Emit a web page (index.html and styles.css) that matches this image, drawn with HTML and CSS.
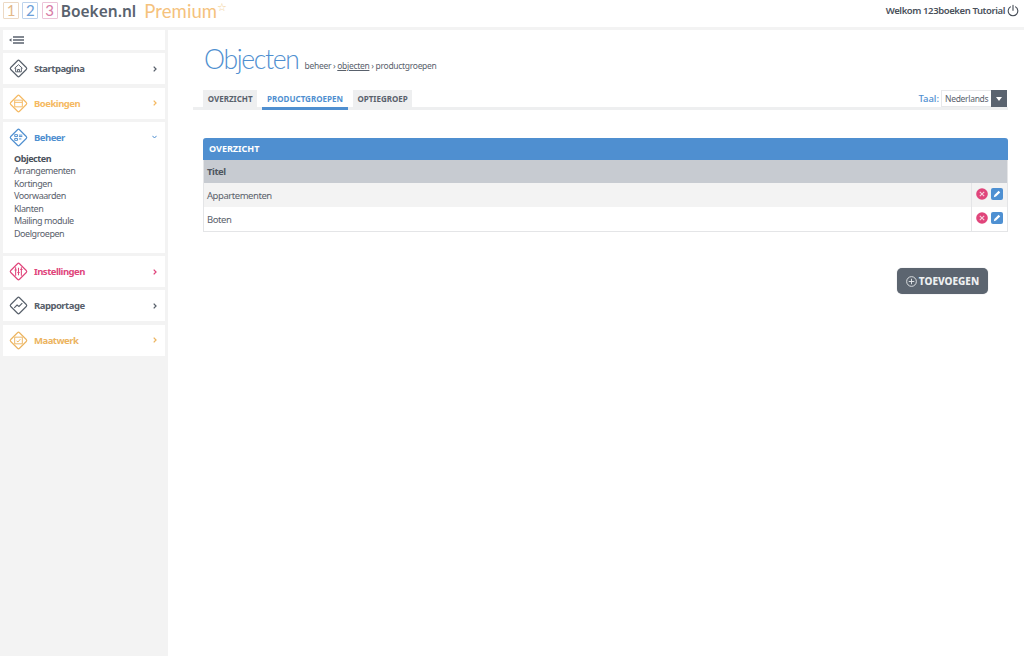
FILE: index.html
```html
<!DOCTYPE html>
<html lang="nl">
<head>
<meta charset="utf-8">
<title>Objecten</title>
<link rel="stylesheet" href="styles.css">
</head>
<body>
<header class="topbar">
  <div class="logo">
    <span class="digit d1">1</span><span class="digit d2">2</span><span class="digit d3">3</span>
    <span class="brand">Boeken.nl</span>
    <span class="premium">Premium</span><span class="star">☆</span>
  </div>
  <div class="welcome">
    <span>Welkom 123boeken Tutorial</span>
    <svg class="power" viewBox="0 0 14 14" width="12" height="13"><path d="M4 2.800a5.600 5.600 0 1 0 6 0M7 .8v6" fill="none" stroke="#444b55" stroke-width="1.300" stroke-linecap="round"/></svg>
  </div>
</header>
<div class="shell">
  <aside class="sidebar">
    <div class="card toggle">
      <svg viewBox="0 0 15 8" width="15" height="8"><path d="M4 1h11M4 4h11M4 7h11" stroke="#5a626d" stroke-width="1.300"/><path d="M0 4l2.500-1.800v3.600z" fill="#5a626d"/></svg>
    </div>
    <div class="card item slate">
      <svg class="ico" viewBox="0 0 22 22"><rect x="4.500" y="4.500" width="13" height="13" rx="1.500" transform="rotate(45 11 11)" fill="none" stroke="currentColor" stroke-width="1.200"/><path d="M6.800 10.800L11 7l4.200 3.800M8 10v4.500h6V10M10 14.500v-2.500h2v2.500" fill="none" stroke="currentColor" stroke-width="1"/></svg>
      <span class="label">Startpagina</span>
      <svg class="chev" viewBox="0 0 4 6" width="4" height="6"><path d="M.7.600L3 3 .7 5.400" fill="none" stroke="currentColor" stroke-width="1.300"/></svg>
    </div>
    <div class="card item orange">
      <svg class="ico" viewBox="0 0 22 22"><rect x="4.500" y="4.500" width="13" height="13" rx="1.500" transform="rotate(45 11 11)" fill="none" stroke="currentColor" stroke-width="1.200"/><path d="M7 7.500h8v7H7zM7 9.800h8" fill="none" stroke="currentColor" stroke-width="1"/></svg>
      <span class="label">Boekingen</span>
      <svg class="chev" viewBox="0 0 4 6" width="4" height="6"><path d="M.7.600L3 3 .7 5.400" fill="none" stroke="currentColor" stroke-width="1.300"/></svg>
    </div>
    <div class="card open">
      <div class="item blue">
        <svg class="ico" viewBox="0 0 22 22"><rect x="4.500" y="4.500" width="13" height="13" rx="1.500" transform="rotate(45 11 11)" fill="none" stroke="currentColor" stroke-width="1.200"/><path d="M7 8h3v2H7zM7 12h3v2H7zM11.500 8.500H15M11.500 10H15M11.500 12.500H14" fill="none" stroke="currentColor" stroke-width="1"/></svg>
        <span class="label">Beheer</span>
        <svg class="chev" viewBox="0 0 5 4" width="5" height="4"><path d="M.4.800L2.500 3 4.600.800" fill="none" stroke="currentColor" stroke-width="1"/></svg>
      </div>
      <ul class="submenu">
        <li class="current">Objecten</li>
        <li>Arrangementen</li>
        <li>Kortingen</li>
        <li>Voorwaarden</li>
        <li>Klanten</li>
        <li>Mailing module</li>
        <li>Doelgroepen</li>
      </ul>
    </div>
    <div class="card item pink">
      <svg class="ico" viewBox="0 0 22 22"><rect x="4.500" y="4.500" width="13" height="13" rx="1.500" transform="rotate(45 11 11)" fill="none" stroke="currentColor" stroke-width="1.200"/><path d="M8 6.500v9M11 7v8M14 6.500v9M6.800 9.500h2.400M9.800 12h2.400M12.800 9h2.400" fill="none" stroke="currentColor" stroke-width="1.100"/></svg>
      <span class="label">Instellingen</span>
      <svg class="chev" viewBox="0 0 4 6" width="4" height="6"><path d="M.7.600L3 3 .7 5.400" fill="none" stroke="currentColor" stroke-width="1.300"/></svg>
    </div>
    <div class="card item slate">
      <svg class="ico" viewBox="0 0 22 22"><rect x="4.500" y="4.500" width="13" height="13" rx="1.500" transform="rotate(45 11 11)" fill="none" stroke="currentColor" stroke-width="1.200"/><path d="M6.500 13.500l3-3 2 1.500 3.500-3.500" fill="none" stroke="currentColor" stroke-width="1.200"/></svg>
      <span class="label">Rapportage</span>
      <svg class="chev" viewBox="0 0 4 6" width="4" height="6"><path d="M.7.600L3 3 .7 5.400" fill="none" stroke="currentColor" stroke-width="1.300"/></svg>
    </div>
    <div class="card item gold">
      <svg class="ico" viewBox="0 0 22 22"><rect x="4.500" y="4.500" width="13" height="13" rx="1.500" transform="rotate(45 11 11)" fill="none" stroke="currentColor" stroke-width="1.200"/><path d="M7 7.500h8v7H7zM9 11.500l1.500 1 2.500-3" fill="none" stroke="currentColor" stroke-width="1"/></svg>
      <span class="label">Maatwerk</span>
      <svg class="chev" viewBox="0 0 4 6" width="4" height="6"><path d="M.7.600L3 3 .7 5.400" fill="none" stroke="currentColor" stroke-width="1.300"/></svg>
    </div>
  </aside>
  <main class="content">
    <div class="heading">
      <h1>Objecten</h1>
      <p class="crumbs">beheer › <a>objecten</a> › productgroepen</p>
    </div>
    <div class="tabbar">
      <div class="tabs">
        <span class="tab">OVERZICHT</span>
        <span class="tab active">PRODUCTGROEPEN</span>
        <span class="tab">OPTIEGROEP</span>
      </div>
      <div class="lang">
        <span class="lang-label">Taal:</span>
        <div class="select"><span class="select-value">Nederlands</span><span class="select-arrow"></span></div>
      </div>
    </div>
    <section class="panel">
      <h2 class="panel-title">OVERZICHT</h2>
      <div class="row head"><span class="cell-title">Titel</span></div>
      <div class="row odd">
        <span class="cell-title">Appartementen</span>
        <span class="actions">
          <svg viewBox="0 0 12 12" width="12" height="12"><circle cx="6" cy="6" r="5.800" fill="#e0457b"/><path d="M3.800 3.800l4.400 4.400M8.200 3.800l-4.400 4.400" stroke="#f5d5e0" stroke-width="1.100"/></svg>
          <svg viewBox="0 0 12 12" width="12" height="12"><rect width="12" height="12" rx="2" fill="#4e90d2"/><path d="M2.800 9.200l.6-2.200 4.200-4.200 1.600 1.600-4.200 4.200z" fill="#fff"/></svg>
        </span>
      </div>
      <div class="row">
        <span class="cell-title">Boten</span>
        <span class="actions">
          <svg viewBox="0 0 12 12" width="12" height="12"><circle cx="6" cy="6" r="5.800" fill="#e0457b"/><path d="M3.800 3.800l4.400 4.400M8.200 3.800l-4.400 4.400" stroke="#f5d5e0" stroke-width="1.100"/></svg>
          <svg viewBox="0 0 12 12" width="12" height="12"><rect width="12" height="12" rx="2" fill="#4e90d2"/><path d="M2.800 9.200l.6-2.200 4.200-4.200 1.600 1.600-4.200 4.200z" fill="#fff"/></svg>
        </span>
      </div>
    </section>
    <div class="footer-actions">
      <button class="add" type="button">
        <svg viewBox="0 0 12 12" width="11" height="11"><circle cx="6" cy="6" r="5.300" fill="none" stroke="#e6e8ea" stroke-width="1"/><path d="M6 3v6M3 6h6" stroke="#e6e8ea" stroke-width="1"/></svg>
        TOEVOEGEN
      </button>
    </div>
  </main>
</div>
</body>
</html>
```

FILE: styles.css
```css
* { box-sizing: border-box; }
html, body { margin: 0; height: 100%; }
body {
  font-family: "Noto Sans", "Open Sans", sans-serif;
  color: #5a616b;
  background: #fff;
  overflow: hidden;
  height: 656px;
}
.topbar {
  height: 27px;
  background: #fff;
  display: flex;
  justify-content: space-between;
  align-items: flex-start;
  padding: 0 5px 0 3px;
}
.logo { display: flex; align-items: center; padding-top: 2px; height: 19px; }
.digit {
  width: 16px;
  height: 17px;
  margin-right: 3.250px;
  border: 1px solid;
  border-radius: 1px;
  font-size: 15px;
  line-height: 15px;
  text-align: center;
  font-family: "Lato", sans-serif;
}
.d1 { color: #e3b888; border-color: #ecd9c4; }
.d2 { color: #6b9ed8; border-color: #bcd2ec; }
.d3 { color: #d77aa5; border-color: #ecc3d8; }
.brand {
  font-size: 15.500px;
  font-weight: 600;
  color: #59626e;
  margin-right: 8px;
}
.premium {
  font-family: "Lato", sans-serif;
  font-size: 18.500px;
  font-weight: 400;
  color: #f5c27c;
  letter-spacing: 0.100px;
}
.star { font-size: 11px; color: #f3cf95; align-self: flex-start; margin-top: -1px; line-height: 11px; }
.welcome {
  display: flex;
  align-items: center;
  gap: 2px;
  padding-top: 4px;
  font-size: 9.500px;
  font-weight: 600;
  letter-spacing: -0.400px;
  color: #4a515b;
}
.shell { display: flex; height: 629px; border-top: 3px solid #f3f3f3; }
.sidebar {
  width: 168px;
  flex: none;
  background: #f3f3f3;
  padding: 0 3px;
  display: flex;
  flex-direction: column;
  gap: 3.300px;
}
.card { background: #fff; }
.toggle { height: 20px; display: flex; align-items: center; padding-left: 6px; }
.item {
  height: 31px;
  display: flex;
  align-items: center;
  padding: 0 8px 0 5px;
}
.ico { width: 21px; height: 21px; flex: none; margin-right: 5px; }
.label { flex: 1; font-size: 9.500px; font-weight: 700; letter-spacing: -0.500px; }
.chev { flex: none; }
.slate { color: #58606b; }
.orange { color: #f5b962; }
.blue { color: #4f8fd0; }
.pink { color: #e0457b; }
.gold { color: #ecb45f; }
.open { height: 131px; }
.submenu {
  list-style: none;
  margin: 0;
  padding: 0 0 0 11px;
  font-size: 9px;
  line-height: 12.500px;
  letter-spacing: -0.450px;
  color: #59616c;
}
.submenu .current { font-weight: 700; color: #4a515b; }
.content { flex: 1; padding: 0 16px 0 25px; min-width: 0; }
.heading {
  display: flex;
  align-items: baseline;
  gap: 6px;
  padding: 11px 0 0 11px;
  height: 60px;
}
h1 {
  margin: 0;
  font-family: "Lato", sans-serif;
  font-size: 26.500px;
  font-weight: 300;
  letter-spacing: -1.300px;
  color: #4f8fd0;
  line-height: 36px;
}
.crumbs { margin: 0; font-size: 8.500px; letter-spacing: -0.300px; color: #59616c; }
.crumbs a { text-decoration: underline; }
.tabbar {
  height: 20px;
  border-bottom: 3px solid #eeeff0;
  display: flex;
  justify-content: space-between;
  align-items: flex-end;
  padding-left: 10px;
}
.tabs { display: flex; gap: 5px; margin-bottom: -3px; }
.tab {
  height: 20px;
  padding: 0 4.750px;
  background: #eeeff0;
  font-size: 8px;
  font-weight: 700;
  line-height: 18px;
  color: #59616c;
}
.tab.active {
  background: #fff;
  color: #4f8fd0;
  border-bottom: 3px solid #4f8fd0;
}
.lang { display: flex; align-items: center; gap: 2px; margin: 0 1px 0 0; }
.lang-label { font-size: 9.500px; font-weight: 500; color: #4f8fd0; }
.select {
  display: flex;
  height: 17px;
  width: 66px;
  border: 1px solid #e7e8ea;
  background: #fff;
}
.select-value { flex: 1; font-size: 8.500px; line-height: 15px; padding-left: 3px; letter-spacing: -0.300px; color: #59616c; }
.select-arrow {
  width: 16px;
  background: #5a636f;
  margin: -1px -1px -1px 0;
  position: relative;
}
.select-arrow::after {
  content: "";
  position: absolute;
  left: 5px; top: 7px;
  border: 3px solid transparent;
  border-top: 4px solid #fff;
  border-bottom: 0;
}
.panel {
  margin: 28px 0 0 10px;
  border: 1px solid #e4e5e7;
  border-top: 0;
  border-radius: 3px 3px 0 0;
}
.panel-title {
  margin: 0 -1px;
  height: 22px;
  background: #4f8fd0;
  color: #fff;
  font-size: 9px;
  font-weight: 700;
  line-height: 22px;
  padding-left: 6px;
  border-radius: 3px 3px 0 0;
}
.row {
  height: 24px;
  display: flex;
  align-items: center;
  font-size: 9.500px;
  letter-spacing: -0.450px;
}
.row.head { height: 23px; background: #c7cbd1; font-weight: 700; color: #4f5660; }
.row.odd { background: #f3f3f3; }
.cell-title { flex: 1; padding-left: 3px; }
.actions {
  width: 36px;
  height: 100%;
  border-left: 1px solid #e4e5e7;
  display: flex;
  align-items: center;
  gap: 3px;
  padding: 0 0 2px 4px;
}
.footer-actions { display: flex; justify-content: flex-end; padding: 36px 20px 0 0; }
.add {
  width: 91px;
  height: 26px;
  border: 0;
  border-radius: 5px;
  background: #5c6570;
  color: #eef0f1;
  font-family: "Noto Sans", sans-serif;
  font-size: 10px;
  font-weight: 800;
  display: flex;
  align-items: center;
  justify-content: center;
  gap: 2px;
  padding: 0;
  box-shadow: 0 0 1px rgba(60, 70, 80, 0.4);
}
```
